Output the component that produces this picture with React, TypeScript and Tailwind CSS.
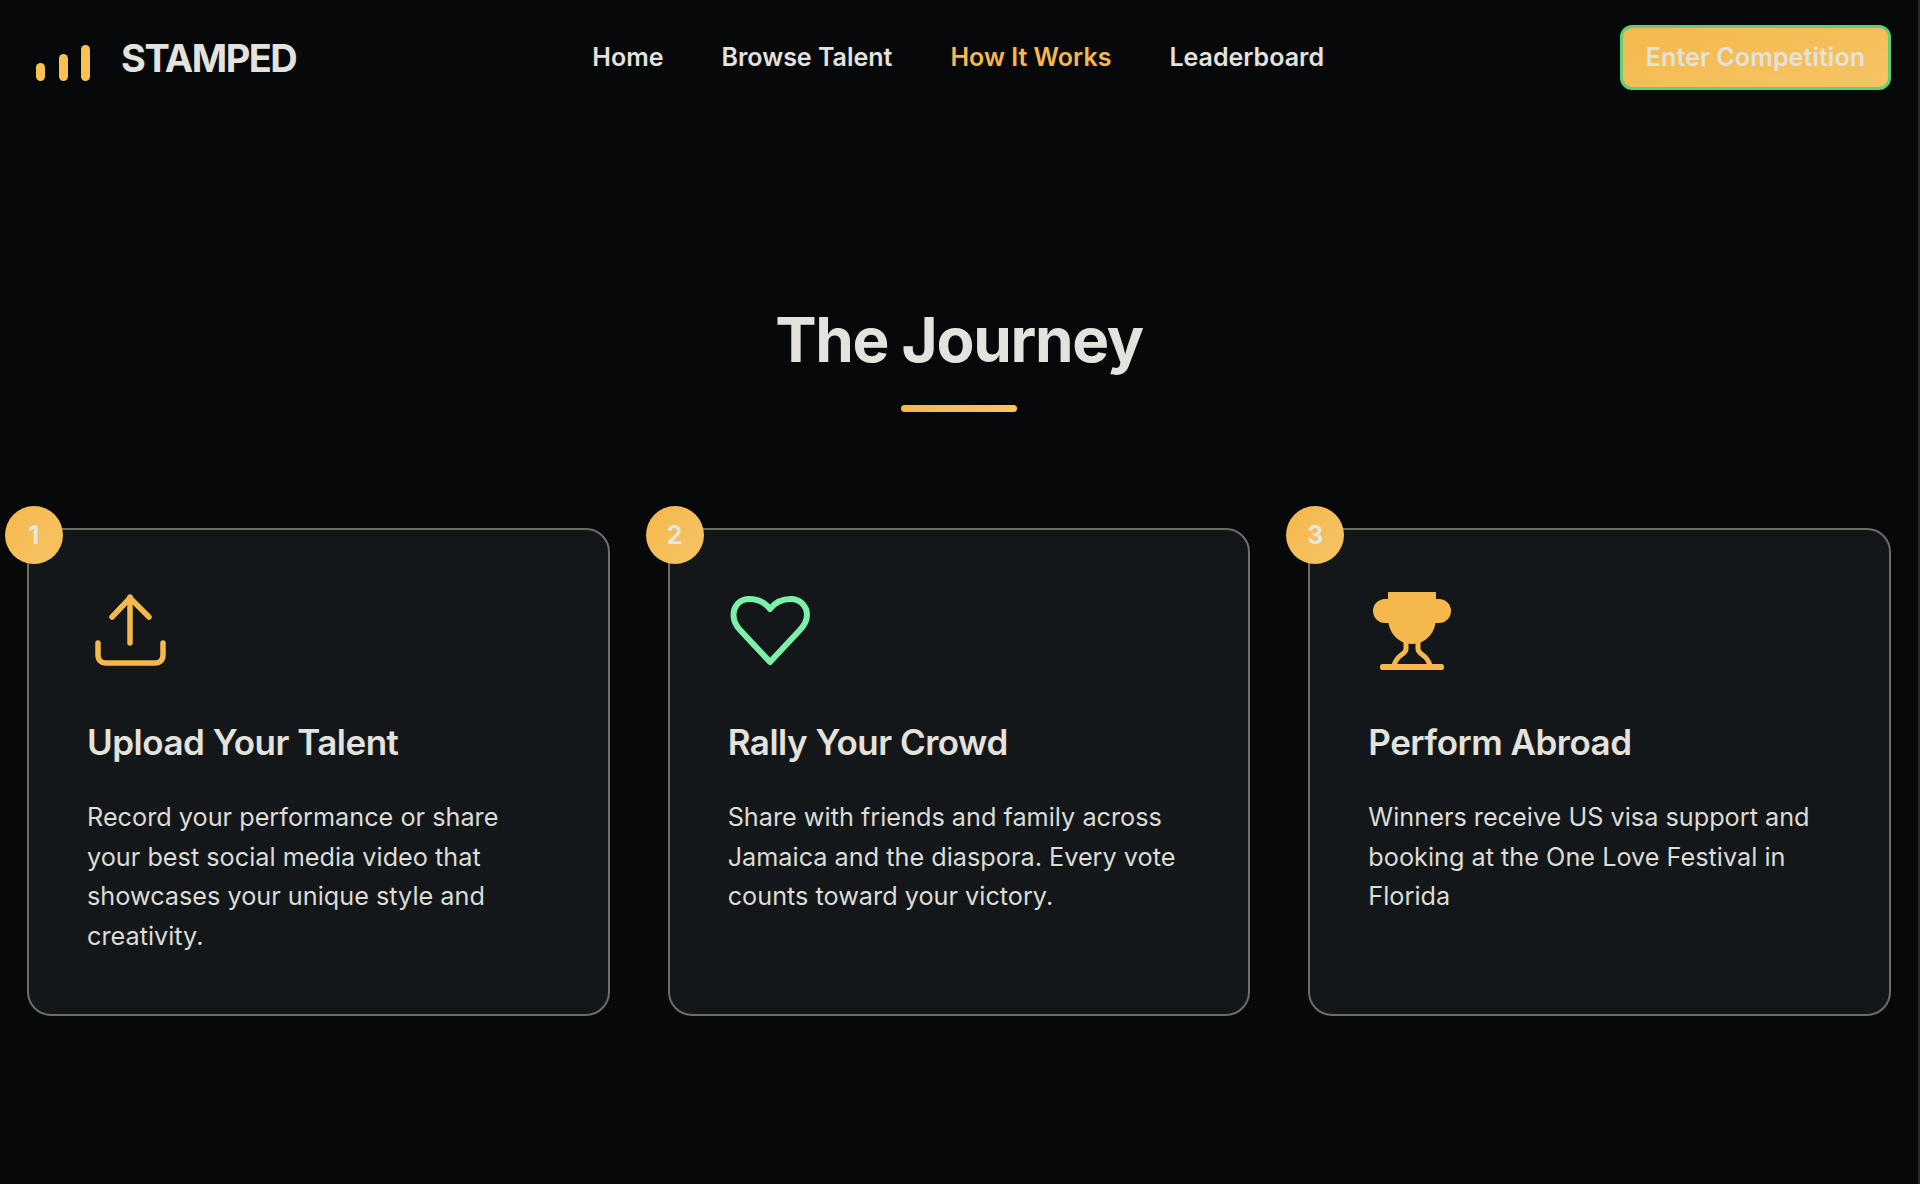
const font = { fontFamily: 'Inter, "Liberation Sans", sans-serif' }

function UploadIcon() {
  return (
    <svg viewBox="0 0 88 88" className="w-[88px] h-[88px]" fill="none" stroke="#f5b84c" strokeWidth="5.5" strokeLinecap="round" strokeLinejoin="round">
      <path d="M43 9V55" />
      <path d="M25 29L43 10L62 29" />
      <path d="M11 55V67C11 72 14 75 19 75H68C73 75 76 72 76 67V55" />
    </svg>
  )
}

function HeartIcon() {
  return (
    <svg viewBox="0 0 88 88" className="w-[88px] h-[88px]" fill="none" stroke="#7cf0a8" strokeWidth="6" strokeLinejoin="round">
      <path d="M42 21C36 13 28 11 21 11C12 11 5.5 18 5.5 27C5.5 34 9 39 13 43L42 74L71 43C75 39 79 34 79 27C79 18 72 11 63 11C56 11 48 13 42 21Z" />
    </svg>
  )
}

function TrophyIcon() {
  return (
    <svg viewBox="0 0 88 88" className="w-[88px] h-[88px]" fill="#f5b84c">
      <path d="M20 4H68V30C68 44 58 56 44 56C30 56 20 44 20 30Z" />
      <rect x="5" y="11" width="30" height="24" rx="12" />
      <rect x="53" y="11" width="30" height="24" rx="12" />
      <path d="M38 54V61C38 67 28 66 26 78M50 54V61C50 67 60 66 62 78" fill="none" stroke="#f5b84c" strokeWidth="5" />
      <rect x="12" y="76" width="64" height="6" rx="2.5" />
    </svg>
  )
}

const steps = [
  { n: 1, title: 'Upload Your Talent', text: 'Record your performance or share your best social media video that showcases your unique style and creativity.', icon: <UploadIcon /> },
  { n: 2, title: 'Rally Your Crowd', text: 'Share with friends and family across Jamaica and the diaspora. Every vote counts toward your victory.', icon: <HeartIcon /> },
  { n: 3, title: 'Perform Abroad', text: 'Winners receive US visa support and booking at the One Love Festival in Florida', icon: <TrophyIcon /> },
]

const links = ['Home', 'Browse Talent', 'How It Works', 'Leaderboard']

export default function App() {
  return (
    <div className="min-h-screen h-[1184px] bg-[#06080a] text-[#e3e2dd] border-r-2 border-[#26282a] overflow-hidden" style={font}>
      <nav className="flex items-center justify-between h-[115px] px-[27px]">
        <div className="flex items-center gap-[31px]">
          <svg viewBox="0 0 63 40" className="w-[63px] h-[40px] mt-[7px]" fill="#f8c250">
            <rect x="9" y="22" width="9" height="18" rx="4.5" />
            <rect x="32" y="13" width="9" height="27" rx="4.5" />
            <rect x="54" y="4" width="9" height="36" rx="4.5" />
          </svg>
          <span className="text-[38px] font-bold tracking-[-1.5px] leading-none">STAMPED</span>
        </div>
        <div className="flex items-center gap-[58px]">
          {links.map((l) => (
            <a key={l} className={`text-[25px] font-semibold ${l === 'How It Works' ? 'text-[#f5b84c]' : ''}`}>{l}</a>
          ))}
        </div>
        <button className="h-[65px] w-[271px] rounded-[12px] border-[3px] border-[#5fcf78] bg-gradient-to-br from-[#f5b84c] to-[#f6c464] text-[25.2px] font-semibold text-[#e3e2dd]">
          Enter Competition
        </button>
      </nav>

      <section className="px-[27px] pt-[187px]">
        <div className="flex flex-col items-center">
          <h2 className="text-[62px] font-bold leading-[76px] tracking-[-1.3px]">The Journey</h2>
          <div className="mt-[27px] w-[116px] h-[7px] rounded-full bg-gradient-to-r from-[#f5b84c] to-[#f8c660]" />
        </div>

        <div className="grid grid-cols-3 gap-[58px] mt-[116px]">
          {steps.map((s) => (
            <div key={s.n} className="relative h-[488px] rounded-[24px] border-2 border-[#6f6c62] bg-[#13171a] p-[58px]">
              <div className="absolute -top-[24px] -left-[24px] flex items-center justify-center w-[58px] h-[58px] pt-[1px] rounded-full bg-gradient-to-br from-[#f5b84c] to-[#f6c464] text-[25px] font-bold text-[#e6e5e1]">
                {s.n}
              </div>
              {s.icon}
              <h3 className="mt-[39px] text-[35px] font-semibold leading-[54px] tracking-[-0.5px]">{s.title}</h3>
              <p className="mt-[29px] text-[25.25px] leading-[39.7px] text-[#dcdbd6]">{s.text}</p>
            </div>
          ))}
        </div>
      </section>
    </div>
  )
}
